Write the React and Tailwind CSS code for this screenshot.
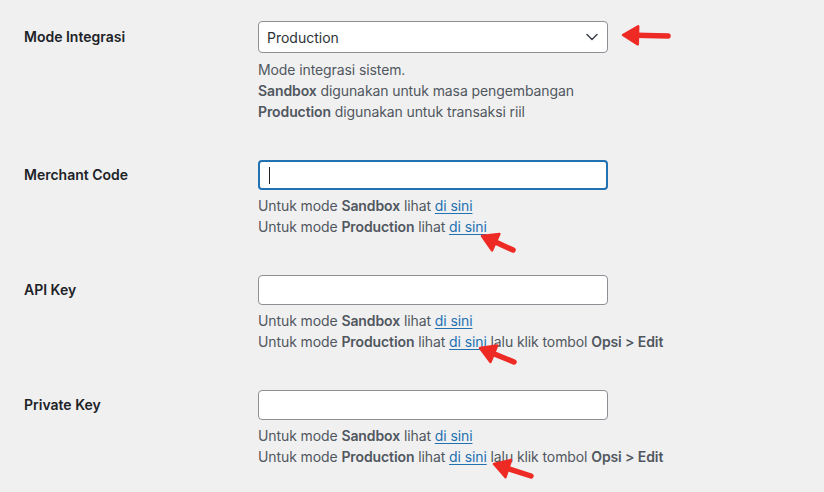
import React from 'react';

const font = { fontFamily: 'Inter, "Noto Sans", sans-serif' };

function Arrow({ x1, y1, x2, y2 }) {
  // tail (x1,y1) -> tip (x2,y2)
  const dx = x2 - x1;
  const dy = y2 - y1;
  const len = Math.hypot(dx, dy);
  const ux = dx / len;
  const uy = dy / len;
  const hl = 15;
  const hw = 9;
  const bx = x2 - ux * hl;
  const by = y2 - uy * hl;
  const px = -uy * hw;
  const py = ux * hw;
  return (
    <g fill="#ee2a24" stroke="#ee2a24" strokeLinecap="round" strokeLinejoin="round">
      <line x1={x1} y1={y1} x2={bx + ux * 2} y2={by + uy * 2} strokeWidth="5.5" />
      <polygon points={`${x2},${y2} ${bx + px},${by + py} ${bx - px},${by - py}`} strokeWidth="2.5" />
    </g>
  );
}

function Link({ children }) {
  return <a className="text-[#2271b1] underline underline-offset-2">{children}</a>;
}

function Desc({ children, first }) {
  return (
    <div className={`${first ? 'mt-[6px]' : 'mt-[5px]'} text-[14px] leading-[21px] tracking-[-0.1px] text-[#50575e]`}>
      {children}
    </div>
  );
}

function Row({ label, h, children }) {
  return (
    <div className="flex">
      <div className={`w-[234px] shrink-0 flex items-center pb-[2px] text-[14px] font-semibold text-[#1d2327] ${h}`}>
        {label}
      </div>
      <div className="flex flex-col">{children}</div>
    </div>
  );
}

function TextBox({ focused }) {
  return (
    <div
      className={`w-[350px] h-[30px] rounded-[4px] bg-white flex items-center px-[9px] ${
        focused ? 'border-2 border-[#2271b1]' : 'border border-[#8c8f94]'
      }`}
    >
      {focused && <span className="w-px h-[17px] bg-[#1d2327]" />}
    </div>
  );
}

export default function App() {
  return (
    <div className="relative w-[824px] h-[492px] bg-[#f0f0f1] overflow-hidden" style={font}>
      <div className="pl-[24px] pt-[21px] flex flex-col gap-[38px]">
        <Row label="Mode Integrasi" h="h-[32px]">
          <div className="w-[350px] h-[32px] rounded-[4px] bg-white border border-[#8c8f94] flex items-center justify-between pl-[8px] pr-[9px] text-[14px] text-[#2c3338]">
            <span>Production</span>
            <svg width="12" height="8" viewBox="0 0 12 8" fill="none">
              <path d="M1 1.5l5 5 5-5" stroke="#3c434a" strokeWidth="1.5" strokeLinecap="round" strokeLinejoin="round" />
            </svg>
          </div>
          <Desc first>
            <div>Mode integrasi sistem.</div>
            <div><b className="font-semibold">Sandbox</b> digunakan untuk masa pengembangan</div>
            <div><b className="font-semibold">Production</b> digunakan untuk transaksi riil</div>
          </Desc>
        </Row>

        <Row label="Merchant Code" h="h-[30px]">
          <TextBox focused />
          <Desc>
            <div>Untuk mode <b className="font-semibold">Sandbox</b> lihat <Link>di sini</Link></div>
            <div>Untuk mode <b className="font-semibold">Production</b> lihat <Link>di sini</Link></div>
          </Desc>
        </Row>

        <Row label="API Key" h="h-[30px]">
          <TextBox />
          <Desc>
            <div>Untuk mode <b className="font-semibold">Sandbox</b> lihat <Link>di sini</Link></div>
            <div>
              Untuk mode <b className="font-semibold">Production</b> lihat <Link>di sini</Link> lalu klik tombol{' '}
              <b className="font-semibold">Opsi &gt; Edit</b>
            </div>
          </Desc>
        </Row>

        <Row label="Private Key" h="h-[30px]">
          <TextBox />
          <Desc>
            <div>Untuk mode <b className="font-semibold">Sandbox</b> lihat <Link>di sini</Link></div>
            <div>
              Untuk mode <b className="font-semibold">Production</b> lihat <Link>di sini</Link> lalu klik tombol{' '}
              <b className="font-semibold">Opsi &gt; Edit</b>
            </div>
          </Desc>
        </Row>
      </div>

      {/* annotation arrows */}
      <svg className="absolute inset-0 pointer-events-none" width="824" height="492">
        <Arrow x1={668} y1={36} x2={623} y2={35} />
        <Arrow x1={513} y1={250} x2={482} y2={236} />
        <Arrow x1={514} y1={362} x2={480} y2={348} />
        <Arrow x1={531} y1={476} x2={494} y2={464} />
      </svg>
    </div>
  );
}
